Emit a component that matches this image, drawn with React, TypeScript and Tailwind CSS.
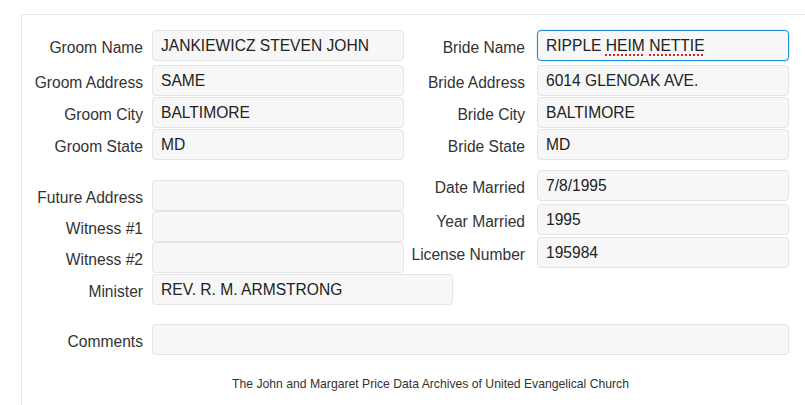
import type { ReactNode } from 'react';

type FieldProps = {
  label: string;
  value?: ReactNode;
  labelW?: string;
  gap?: string;
  inputW?: string;
  focused?: boolean;
  className?: string;
};

function Field({ label, value, labelW = 'w-[121px]', gap = 'gap-[9px]', inputW = 'w-[252px]', focused, className = '' }: FieldProps) {
  return (
    <div className={`flex items-center ${gap} ${className}`}>
      <label className={`${labelW} shrink-0 whitespace-nowrap text-right pt-[5px] text-[15.6px] text-[#333]`}>{label}</label>
      <div
        className={`${inputW} h-[31px] shrink-0 whitespace-nowrap rounded-[4px] border bg-[#f7f7f7] pl-[8px] pt-[5px] text-[15.6px] leading-[19px] text-[#222] ${
          focused ? 'border-[#1d8fd4] shadow-[0_0_2px_rgba(29,143,212,0.4)]' : 'border-[#e4e4e4]'
        }`}
      >
        {value}
      </div>
    </div>
  );
}

const squiggle = 'underline decoration-dotted decoration-[#e02020] decoration-2 underline-offset-[3px]';

export default function App() {
  return (
    <div className="h-[405px] w-[805px] overflow-hidden bg-white" style={{ fontFamily: '"Liberation Sans", Arial, sans-serif' }}>
      <div className="ml-[21px] mt-[14px] w-[818px] border-l border-t border-[#e6e6e6] pb-[40px]">
        {/* Groom / bride */}
        <div className="flex pt-[15px]">
          <div className="flex flex-col">
            <Field label="Groom Name" value="JANKIEWICZ STEVEN JOHN" />
            <Field label="Groom Address" value="SAME" className="mt-[4px]" />
            <Field label="Groom City" value="BALTIMORE" className="mt-[1px]" />
            <Field label="Groom State" value="MD" className="mt-[1px]" />
          </div>
          <div className="flex flex-col">
            <Field
              label="Bride Name"
              gap="gap-[12px]"
              focused
              value={
                <>
                  RIPPLE <span className={squiggle}>HEIM</span> <span className={squiggle}>NETTIE</span>
                </>
              }
            />
            <Field label="Bride Address" gap="gap-[12px]" value="6014 GLENOAK AVE." className="mt-[4px]" />
            <Field label="Bride City" gap="gap-[12px]" value="BALTIMORE" className="mt-[1px]" />
            <Field label="Bride State" gap="gap-[12px]" value="MD" className="mt-[1px]" />
          </div>
        </div>

        {/* Other details */}
        <div className="flex">
          <div className="mt-[20px] flex flex-col">
            <Field label="Future Address" />
            <Field label="Witness #1" />
            <Field label="Witness #2" />
            <Field label="Minister" value="REV. R. M. ARMSTRONG" inputW="w-[301px]" className="mt-[1px]" />
          </div>
          <div className="mt-[10px] -ml-[98px] flex flex-col">
            <Field label="Date Married" labelW="w-[170px]" gap="gap-[12px]" value="7/8/1995" />
            <Field label="Year Married" labelW="w-[170px]" gap="gap-[12px]" value="1995" className="mt-[3px]" />
            <Field label="License Number" labelW="w-[170px]" gap="gap-[12px]" value="195984" className="mt-[2px]" />
          </div>
        </div>

        <Field label="Comments" inputW="w-[637px]" className="mt-[19px]" />

        <p className="mt-[20px] text-center text-[12.2px] text-[#333]">
          The John and Margaret Price Data Archives of United Evangelical Church
        </p>
      </div>
    </div>
  );
}
